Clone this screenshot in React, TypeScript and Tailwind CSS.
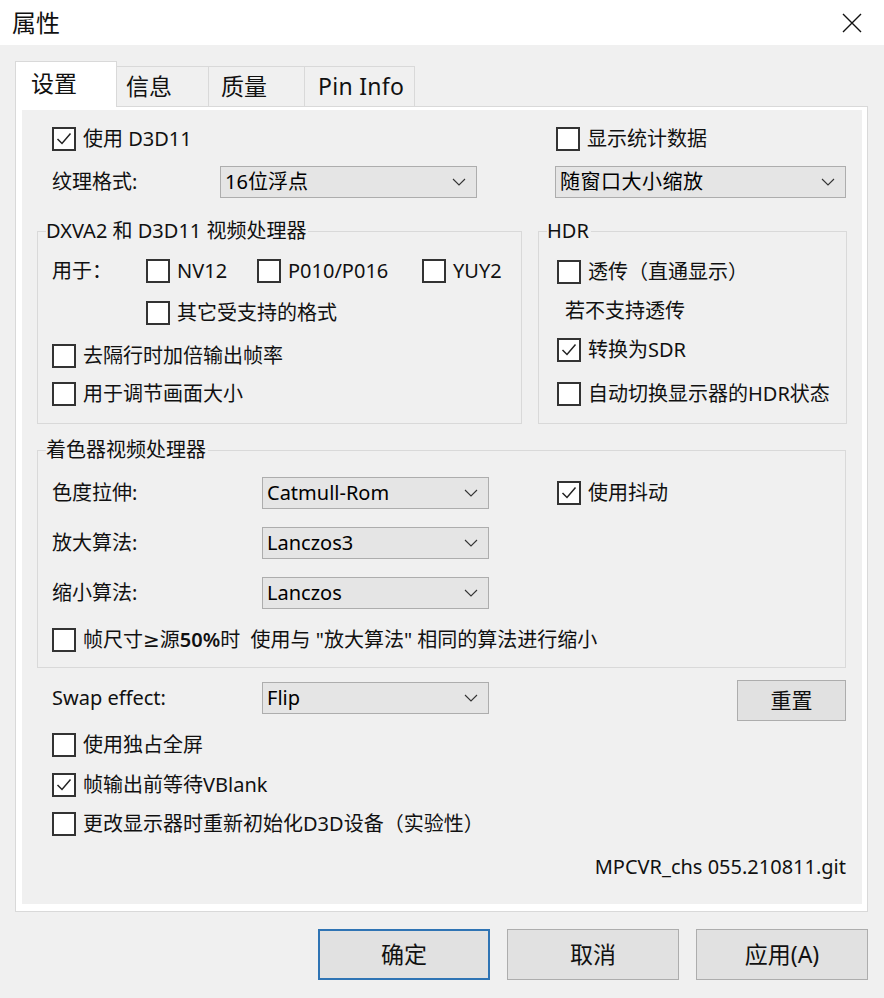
import React from "react";

function Box({ checked = false }: { checked?: boolean }) {
  return (
    <span className="w-[24px] h-[24px] border-2 border-[#333333] bg-white flex items-center justify-center shrink-0">
      {checked && (
        <svg width="18" height="18" viewBox="0 0 18 18">
          <path d="M2.5 9 L7 13.5 L15.5 3.5" fill="none" stroke="#222" strokeWidth="1.5" />
        </svg>
      )}
    </span>
  );
}

function Check({ label, checked = false, className = "" }: { label: React.ReactNode; checked?: boolean; className?: string }) {
  return (
    <div className={"flex items-center h-[24px] gap-[7px] " + className}>
      <Box checked={checked} />
      <span className="leading-none whitespace-nowrap">{label}</span>
    </div>
  );
}

function Combo({ value, className = "" }: { value: string; className?: string }) {
  return (
    <div className={"h-[32px] bg-[#e5e5e5] border border-[#adadad] flex items-center justify-between pl-[4px] pr-[10px] shrink-0 " + className}>
      <span className="leading-none whitespace-nowrap text-black">{value}</span>
      <svg width="14" height="8" viewBox="0 0 14 8">
        <path d="M1 1 L7 7 L13 1" fill="none" stroke="#333" strokeWidth="1.1" />
      </svg>
    </div>
  );
}

function Group({ title, className = "", children }: { title: string; className?: string; children: React.ReactNode }) {
  return (
    <div className={"relative border border-[#d9d9d9] shrink-0 " + className}>
      <span className="absolute left-[8px] top-[-13px] bg-[#f0f0f0] pr-[2px] leading-none text-[20px] h-[24px] flex items-center">{title}</span>
      {children}
    </div>
  );
}

export default function App() {
  return (
    <div className="w-[884px] h-[998px] bg-[#f0f0f0] text-[20px] text-[#111] font-['Noto_Sans','Noto_Sans_CJK_SC',sans-serif] overflow-hidden">
      {/* Title bar */}
      <div className="h-[45px] bg-white flex items-center justify-between pl-[12px] pr-[22px]">
        <span className="text-[24px] leading-none">属性</span>
        <svg width="20" height="20" viewBox="0 0 20 20">
          <path d="M1 1 L19 19 M19 1 L1 19" stroke="#111" strokeWidth="1.4" />
        </svg>
      </div>

      <div className="pl-[15px] pr-[16px] pt-[16px]">
        {/* Tabs */}
        <div className="flex items-end h-[46px] -mb-px relative z-10">
          <div className="w-[102px] h-[46px] bg-white border border-[#d9d9d9] border-b-0 flex items-center pl-[15px] text-[23px] leading-none pb-[2px]">设置</div>
          <div className="w-[92px] h-[41px] bg-[#f0f0f0] border border-l-0 border-[#d9d9d9] flex items-center pl-[9px] text-[23px] leading-none">信息</div>
          <div className="w-[96px] h-[41px] bg-[#f0f0f0] border border-l-0 border-[#d9d9d9] flex items-center pl-[12px] text-[23px] leading-none">质量</div>
          <div className="w-[110px] h-[41px] bg-[#f0f0f0] border border-l-0 border-[#d9d9d9] flex items-center pl-[13px] text-[23px] leading-none tracking-[0.3px]">Pin Info</div>
        </div>

        {/* Panel */}
        <div className="w-[853px] h-[806px] bg-white border border-[#d9d9d9] pl-[6px] pt-[3px]">
          <div className="w-[840px] h-[794px] bg-[#f0f0f0] pl-[15px] pr-[16px] pt-[17px] flex flex-col">
            {/* Top rows */}
            <div className="flex gap-[16px]">
              <div className="w-[485px] pl-[15px] flex flex-col">
                <Check label="使用 D3D11" checked />
                <div className="flex items-center h-[32px] mt-[15px]">
                  <span className="w-[168px] leading-none">纹理格式:</span>
                  <Combo value="16位浮点" className="w-[257px]" />
                </div>
              </div>
              <div className="w-[309px] pl-[19px] flex flex-col">
                <Check label="显示统计数据" />
                <div className="mt-[15px] -ml-[1px]">
                  <Combo value="随窗口大小缩放" className="w-[291px] tracking-[0.5px]" />
                </div>
              </div>
            </div>

            {/* Groups */}
            <div className="flex gap-[16px] mt-[33px]">
              <Group title="DXVA2 和 D3D11 视频处理器" className="w-[485px] h-[193px] pl-[14px] pt-[27px]">
                <div className="flex items-center h-[24px]">
                  <span className="w-[94px] leading-none">用于：</span>
                  <Check label="NV12" className="w-[111px]" />
                  <Check label="P010/P016" className="w-[165px]" />
                  <Check label="YUY2" />
                </div>
                <Check label="其它受支持的格式" className="ml-[94px] mt-[18px]" />
                <Check label="去隔行时加倍输出帧率" className="mt-[19px]" />
                <Check label="用于调节画面大小" className="mt-[14px]" />
              </Group>
              <Group title="HDR" className="w-[309px] h-[193px] pl-[18px] pt-[28px]">
                <Check label="透传（直通显示）" />
                <div className="h-[24px] mt-[15px] pl-[8px] flex items-center leading-none">若不支持透传</div>
                <Check label="转换为SDR" checked className="mt-[15px]" />
                <Check label="自动切换显示器的HDR状态" className="mt-[20px]" />
              </Group>
            </div>

            {/* Shader group */}
            <Group title="着色器视频处理器" className="w-[809px] h-[218px] mt-[26px] pl-[14px] pt-[26px]">
              <div className="flex items-center h-[32px]">
                <span className="w-[210px] leading-none">色度拉伸:</span>
                <Combo value="Catmull-Rom" className="w-[227px]" />
                <Check label="使用抖动" checked className="ml-[68px]" />
              </div>
              <div className="flex items-center h-[32px] mt-[18px]">
                <span className="w-[210px] leading-none">放大算法:</span>
                <Combo value="Lanczos3" className="w-[227px]" />
              </div>
              <div className="flex items-center h-[32px] mt-[18px]">
                <span className="w-[210px] leading-none">缩小算法:</span>
                <Combo value="Lanczos" className="w-[227px]" />
              </div>
              <Check
                label={
                  <span>
                    帧尺寸<span className="font-['DejaVu_Sans',sans-serif]">≥</span>源<span className="font-semibold">50%</span>时&nbsp;&nbsp;使用与 "放大算法" 相同的算法进行缩小
                  </span>
                }
                className="mt-[19px]"
              />
            </Group>

            {/* Swap effect */}
            <div className="flex items-start h-[41px] mt-[12px] pl-[15px]">
              <div className="flex items-center h-[32px] mt-[2px]">
                <span className="w-[210px] leading-none">Swap effect:</span>
                <Combo value="Flip" className="w-[227px]" />
              </div>
              <div className="flex-1" />
              <div className="w-[109px] h-[41px] bg-[#e1e1e1] border border-[#adadad] flex items-center justify-center leading-none text-[21px]">重置</div>
            </div>
            <div className="pl-[15px] flex flex-col">
              <Check label="使用独占全屏" className="mt-[12px]" />
              <Check label="帧输出前等待VBlank" checked className="mt-[16px]" />
              <Check label="更改显示器时重新初始化D3D设备（实验性）" className="mt-[15px]" />
              <div className="h-[24px] mt-[19px] flex items-center justify-end leading-none">MPCVR_chs 055.210811.git</div>
            </div>
          </div>
        </div>

        {/* Bottom buttons */}
        <div className="flex justify-end gap-[17px] mt-[17px]">
          <div className="w-[172px] h-[51px] bg-[#e1e1e1] border-2 border-[#2f74b4] flex items-center justify-center text-[23px] leading-none">确定</div>
          <div className="w-[172px] h-[51px] bg-[#e1e1e1] border border-[#adadad] flex items-center justify-center text-[23px] leading-none">取消</div>
          <div className="w-[172px] h-[51px] bg-[#e1e1e1] border border-[#adadad] flex items-center justify-center text-[23px] leading-none">应用(A)</div>
        </div>
      </div>
    </div>
  );
}
